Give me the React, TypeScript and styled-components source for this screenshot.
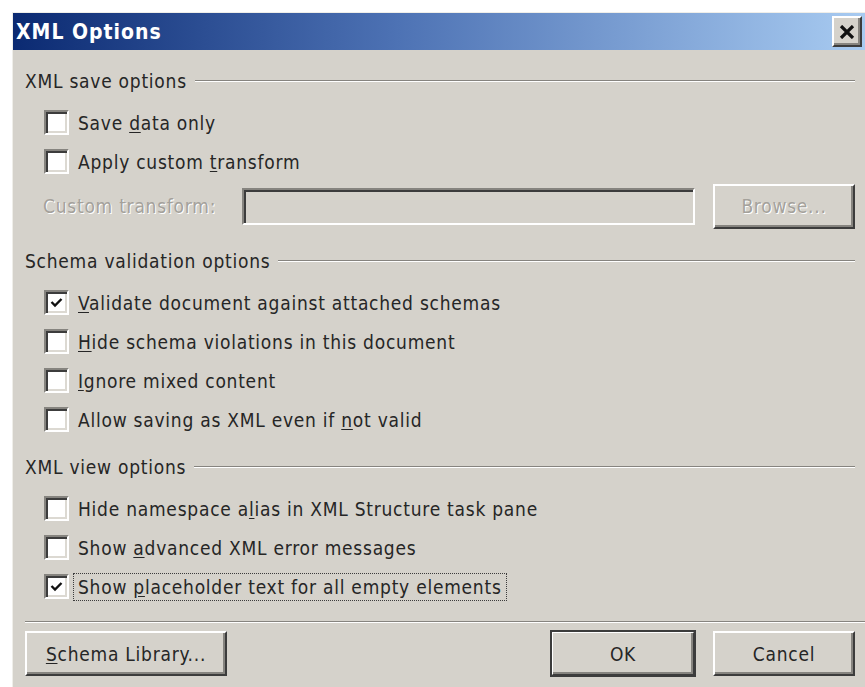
import React from "react";
import styled, { createGlobalStyle } from "styled-components";

const face = "#d5d2cb";
const shadow = "#86847f";
const dark = "#3c3c3c";
const text = "#262626";
const grayText = "#a4a19b";

const GlobalStyle = createGlobalStyle`
  html, body {
    margin: 0;
    padding: 0;
    background: #ffffff;
    overflow: hidden;
  }
  body {
    font-family: "DejaVu Sans Condensed", "DejaVu Sans", sans-serif;
    color: ${text};
    letter-spacing: 0.75px;
  }
`;

const Window = styled.div`
  margin: 12px 0 0 12px;
  width: 853px;
  height: 675px;
  box-sizing: border-box;
  background: ${face};
  border-left: 1px solid #efeee9;
  border-top: 1px solid #efeee9;
  display: flex;
  flex-direction: column;
`;

const TitleBar = styled.div`
  height: 37px;
  flex: none;
  display: flex;
  align-items: center;
  justify-content: space-between;
  padding: 0 3px 0 3px;
  background: linear-gradient(to right, #0b2a72 0%, #4d72b4 45%, #a8cbf1 100%);
  color: #ffffff;
  font-size: 21px;
  font-weight: bold;
  letter-spacing: 1px;
`;

const CloseButton = styled.div`
  width: 30px;
  height: 31px;
  box-sizing: border-box;
  display: flex;
  align-items: center;
  justify-content: center;
  background: ${face};
  border: 2px solid;
  border-color: #ffffff ${dark} ${dark} #ffffff;
  box-shadow: inset -2px -2px ${shadow};
`;

const Body = styled.div`
  flex: 1;
  padding: 16px 10px 0 12px;
  display: flex;
  flex-direction: column;
`;

const GroupHeader = styled.div<{ $gap: number }>`
  height: 30px;
  margin-top: ${p => p.$gap}px;
  margin-bottom: 7px;
  display: flex;
  align-items: center;
  gap: 8px;
  font-size: 19px;
`;

const Rule = styled.div`
  flex: 1;
  height: 0;
  border-top: 1px solid ${shadow};
  border-bottom: 1px solid #ffffff;
`;

const Row = styled.div`
  height: 39px;
  display: flex;
  align-items: center;
  padding-left: 19px;
`;

const Box = styled.div`
  width: 25px;
  height: 25px;
  flex: none;
  box-sizing: border-box;
  background: #ffffff;
  border: 2px solid;
  border-color: ${shadow} #ffffff #ffffff ${shadow};
  box-shadow: inset 2px 2px ${dark}, inset -2px -2px #dcd9d2;
  display: flex;
  align-items: center;
  justify-content: center;
`;

const Label = styled.span<{ $focused?: boolean }>`
  margin-left: ${p => (p.$focused ? 4 : 9)}px;
  padding: ${p => (p.$focused ? "2px 4px" : "0")};
  border: ${p => (p.$focused ? `1px dotted ${dark}` : "none")};
  font-size: 19px;
  white-space: nowrap;

  u {
    text-underline-offset: 2px;
  }
`;

const TransformRow = styled.div`
  height: 46px;
  margin-top: 2px;
  display: flex;
  align-items: center;
  padding-left: 18px;
`;

const DisabledLabel = styled.span`
  width: 199px;
  font-size: 19px;
  color: ${grayText};
  text-shadow: 1px 1px #ffffff;
`;

const PathInput = styled.div`
  width: 453px;
  height: 37px;
  box-sizing: border-box;
  background: ${face};
  border: 2px solid;
  border-color: ${shadow} #ffffff #ffffff ${shadow};
  box-shadow: inset 2px 2px ${dark};
`;

const Separator = styled.div`
  margin-top: 15px;
  margin-right: -10px;
  border-top: 1px solid ${shadow};
  border-bottom: 1px solid #ffffff;
`;

const ButtonRow = styled.div`
  margin-top: 8px;
  display: flex;
  align-items: center;
  gap: 18px;
`;

const Button = styled.button<{ $width: number; $isDefault?: boolean; $disabled?: boolean }>`
  width: ${p => p.$width}px;
  height: 45px;
  box-sizing: border-box;
  padding: 0;
  background: ${face};
  font-family: inherit;
  font-size: 19px;
  letter-spacing: 0.75px;
  color: ${p => (p.$disabled ? grayText : text)};
  text-shadow: ${p => (p.$disabled ? "1px 1px #ffffff" : "none")};
  border: 2px solid;
  border-color: #ffffff ${dark} ${dark} #ffffff;
  box-shadow: inset -2px -2px ${shadow};
  outline: ${p => (p.$isDefault ? `2px solid ${dark}` : "none")};
  outline-offset: -1px;

  u {
    text-underline-offset: 2px;
  }
`;

const Spacer = styled.div`
  flex: 1;
`;

const CloseGlyph = () => (
  <svg width="16" height="14" viewBox="0 0 16 14">
    <path d="M2 1 L14 13 M14 1 L2 13" stroke="#111" strokeWidth="3.2" />
  </svg>
);

const Check = () => (
  <svg width="13" height="11" viewBox="0 0 13 11">
    <path d="M1.5 5 L5 8.5 L11.5 2" fill="none" stroke="#111" strokeWidth="2.4" />
  </svg>
);

function CheckRow({ checked, focused, children }: { checked?: boolean; focused?: boolean; children: React.ReactNode }) {
  return (
    <Row>
      <Box>{checked && <Check />}</Box>
      <Label $focused={focused}>{children}</Label>
    </Row>
  );
}

export default function App() {
  return (
    <>
      <GlobalStyle />
      <Window>
        <TitleBar>
          <span>XML Options</span>
          <CloseButton>
            <CloseGlyph />
          </CloseButton>
        </TitleBar>
        <Body>
          <GroupHeader $gap={0}>
            XML save options
            <Rule />
          </GroupHeader>
          <CheckRow>
            Save <u>d</u>ata only
          </CheckRow>
          <CheckRow>
            Apply custom <u>t</u>ransform
          </CheckRow>
          <TransformRow>
            <DisabledLabel>Custom transform:</DisabledLabel>
            <PathInput />
            <Spacer />
            <Button $width={142} $disabled>
              Browse...
            </Button>
          </TransformRow>

          <GroupHeader $gap={17}>
            Schema validation options
            <Rule />
          </GroupHeader>
          <CheckRow checked>
            <u>V</u>alidate document against attached schemas
          </CheckRow>
          <CheckRow>
            <u>H</u>ide schema violations in this document
          </CheckRow>
          <CheckRow>
            <u>I</u>gnore mixed content
          </CheckRow>
          <CheckRow>
            Allow saving as XML even if <u>n</u>ot valid
          </CheckRow>

          <GroupHeader $gap={13}>
            XML view options
            <Rule />
          </GroupHeader>
          <CheckRow>
            Hide namespace a<u>l</u>ias in XML Structure task pane
          </CheckRow>
          <CheckRow>
            Show <u>a</u>dvanced XML error messages
          </CheckRow>
          <CheckRow checked focused>
            Show <u>p</u>laceholder text for all empty elements
          </CheckRow>

          <Separator />
          <ButtonRow>
            <Button $width={202}>
              <u>S</u>chema Library...
            </Button>
            <Spacer />
            <Button $width={144} $isDefault>
              OK
            </Button>
            <Button $width={142}>Cancel</Button>
          </ButtonRow>
        </Body>
      </Window>
    </>
  );
}
